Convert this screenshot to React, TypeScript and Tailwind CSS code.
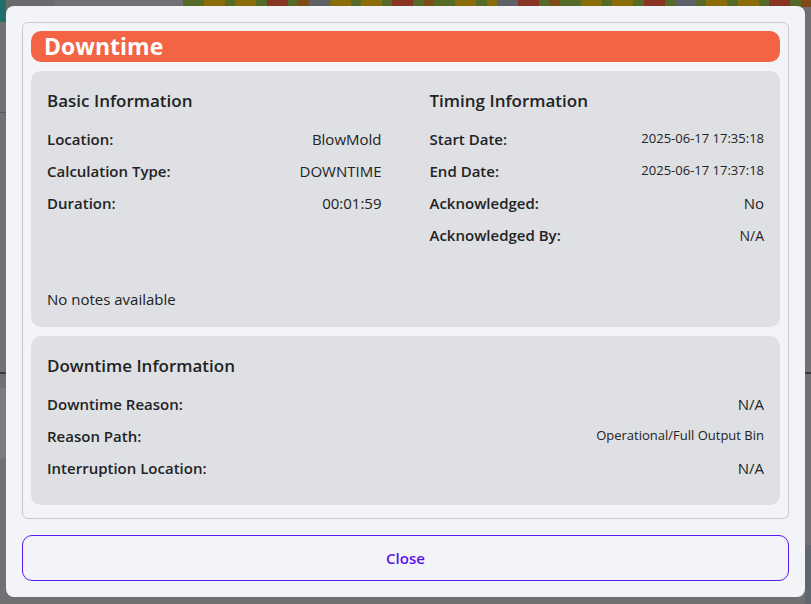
import React from 'react';

interface Field {
  label: string;
  value: string;
  size?: string;
}

const stripeColors = [
  'bg-[#566a28]', 'bg-[#8a6c08]', 'bg-[#566a28]', 'bg-[#8a3426]', 'bg-[#8a6c08]', 'bg-[#566a28]',
  'bg-[#8a6c08]', 'bg-[#7f4c18]', 'bg-[#566a28]', 'bg-[#8a6c08]', 'bg-[#8a3426]', 'bg-[#566a28]',
];

const gapIndexes = [12, 13, 30, 31, 47, 48];

const basicInfo: Field[] = [
  { label: 'Location:', value: 'BlowMold' },
  { label: 'Calculation Type:', value: 'DOWNTIME' },
  { label: 'Duration:', value: '00:01:59' },
];

const timingInfo: Field[] = [
  { label: 'Start Date:', value: '2025-06-17 17:35:18', size: 'text-[13px]' },
  { label: 'End Date:', value: '2025-06-17 17:37:18', size: 'text-[13px]' },
  { label: 'Acknowledged:', value: 'No', size: 'text-[15px]' },
  { label: 'Acknowledged By:', value: 'N/A', size: 'text-[14px]' },
];

const downtimeInfo: Field[] = [
  { label: 'Downtime Reason:', value: 'N/A', size: 'text-[15px]' },
  { label: 'Reason Path:', value: 'Operational/Full Output Bin', size: 'text-[13px]' },
  { label: 'Interruption Location:', value: 'N/A', size: 'text-[15px]' },
];

const FieldRow: React.FC<{ field: Field }> = ({ field }) => (
  <div className="flex h-8 items-center justify-between">
    <span className="text-[15px] font-semibold text-[#232323]">{field.label}</span>
    <span className={`${field.size || 'text-[15px]'} text-[#232323]`}>{field.value}</span>
  </div>
);

const Backdrop: React.FC = () => {
  const stripes = Array.from({ length: 60 }, (_, i) => stripeColors[(i * 7 + (i % 3)) % stripeColors.length]);
  return (
    <div className="absolute inset-0">
      <div className="flex h-[7px]">
        <div className="w-[55px] bg-[#6a6a6d]" />
        <div className="w-[128px] bg-[#6f7073]" />
        <div className="flex flex-1">
          {stripes.map((c, i) => (
            <div key={i} className={`flex-1 ${gapIndexes.includes(i) ? 'bg-[#5d6066]' : c}`} />
          ))}
        </div>
      </div>
      <div className="absolute left-0 top-0 h-[22px] w-[6px] bg-[#1f6f6a]" />
      <div className="absolute left-0 top-[112px] h-px w-[6px] bg-[#5a5a5c]" />
      <div className="absolute left-0 top-[372px] h-[2px] w-[6px] bg-[#3a3a3c]" />
      <div className="absolute right-0 top-[372px] h-[2px] w-[6px] bg-[#3a3a3c]" />
      <div className="absolute left-0 top-[388px] h-[70px] w-[6px] bg-[#7b7b7e]" />
      <div className="absolute right-0 top-[545px] h-[59px] w-[6px] bg-[#5f6870]" />
    </div>
  );
};

const App: React.FC = () => {
  return (
    <div
      className="relative h-[604px] w-full overflow-hidden bg-[#717174]"
      style={{ fontFamily: '"Open Sans", "Noto Sans", sans-serif' }}
    >
      <Backdrop />
      <div className="absolute left-[6px] top-[6px] flex h-[591px] w-[799px] flex-col rounded-lg bg-[#f3f4f8] p-4">
        <div className="rounded-md border border-[#c8cacf] px-2 pb-[13px] pt-2">
          <div className="flex h-[31px] items-center rounded-[10px] bg-[#f26444] px-[13px]">
            <h1 className="text-[23px] font-bold leading-none text-white">Downtime</h1>
          </div>

          <div className="mt-[9px] rounded-[10px] bg-[#dee0e4] p-4">
            <div className="grid grid-cols-2 gap-12">
              <div>
                <h2 className="mb-2 text-[17px] font-semibold leading-7 text-[#232323]">Basic Information</h2>
                {basicInfo.map((f) => (
                  <FieldRow key={f.label} field={f} />
                ))}
              </div>
              <div>
                <h2 className="mb-2 text-[17px] font-semibold leading-7 text-[#232323]">Timing Information</h2>
                {timingInfo.map((f) => (
                  <FieldRow key={f.label} field={f} />
                ))}
              </div>
            </div>
            <p className="mt-9 text-[15px] leading-6 text-[#232323]">No notes available</p>
          </div>

          <div className="mt-[9px] rounded-[10px] bg-[#dee0e4] px-4 pb-[21px] pt-4">
            <h2 className="mb-2 text-[17px] font-semibold leading-7 text-[#232323]">Downtime Information</h2>
            {downtimeInfo.map((f) => (
              <FieldRow key={f.label} field={f} />
            ))}
          </div>
        </div>

        <button className="mt-4 flex h-[46px] w-full items-center justify-center rounded-[10px] border border-[#5a18f0] text-[15px] font-semibold text-[#5a12ee]">
          Close
        </button>
      </div>
    </div>
  );
};

export default App;
